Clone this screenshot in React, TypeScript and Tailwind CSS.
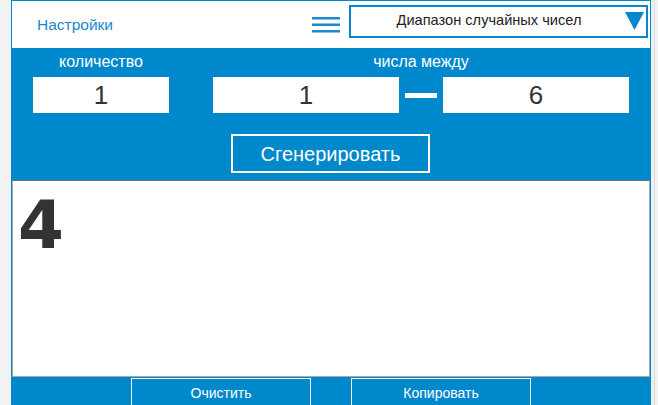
import { useState } from "react";

const font = { fontFamily: '"Liberation Sans", Arial, sans-serif' };

function Hamburger() {
  return (
    <svg width="28" height="18" viewBox="0 0 28 18" className="shrink-0">
      <rect x="0" y="1" width="28" height="2.5" fill="#1a8ad0" />
      <rect x="0" y="7.5" width="28" height="2.5" fill="#1a8ad0" />
      <rect x="0" y="14" width="28" height="2.5" fill="#1a8ad0" />
    </svg>
  );
}

export default function App() {
  const [count, setCount] = useState("1");
  const [from, setFrom] = useState("1");
  const [to, setTo] = useState("6");
  const [result, setResult] = useState("4");

  const generate = () => {
    const n = Math.max(1, parseInt(count) || 1);
    const a = parseInt(from) || 0;
    const b = parseInt(to) || 0;
    const lo = Math.min(a, b);
    const hi = Math.max(a, b);
    const out: number[] = [];
    for (let i = 0; i < n; i++) out.push(lo + Math.floor(Math.random() * (hi - lo + 1)));
    setResult(out.join(", "));
  };

  return (
    <div className="flex w-[658px] h-[405px] overflow-hidden bg-[#f3f3f3]" style={font}>
      <div className="w-[11px] shrink-0" />

      <div className="w-[640px] shrink-0 flex flex-col bg-[#0088cc] pt-[1px] pl-[1px] pr-[1px]">
        {/* Header */}
        <div className="h-[47px] shrink-0 bg-white flex items-center pl-[25px] pr-[2px]">
          <span className="text-[15.5px] text-[#1a88cc] mt-[1px]">Настройки</span>
          <div className="flex-1" />
          <Hamburger />
          <div className="ml-[9px] w-[299px] h-[33px] mb-[7px] border-2 border-[#0a86cc] flex items-center">
            <span className="flex-1 text-center text-[14.6px] text-[#222] pl-[2px]">Диапазон случайных чисел</span>
            <svg width="19" height="18" viewBox="0 0 19 18" className="mr-[2px]">
              <polygon points="0,0 19,0 9.5,18" fill="#0a86cc" />
            </svg>
          </div>
        </div>

        {/* Controls */}
        <div className="flex flex-col shrink-0 pt-[4px] pb-[7px]">
          <div className="flex pl-[21px]">
            <div className="w-[136px] flex flex-col items-center">
              <span className="h-[20px] leading-[20px] text-[16px] text-white">количество</span>
              <input
                value={count}
                onChange={(e) => setCount(e.target.value)}
                style={font}
                className="mt-[5px] w-[136px] h-[36px] bg-white text-center text-[26px] text-[#333] outline-none"
              />
            </div>
            <div className="ml-[44px] w-[416px] flex flex-col items-center">
              <span className="h-[20px] leading-[20px] text-[16px] text-white">числа между</span>
              <div className="mt-[5px] flex items-center">
                <input
                  value={from}
                  onChange={(e) => setFrom(e.target.value)}
                  style={font}
                  className="w-[186px] h-[36px] bg-white text-center text-[26px] text-[#333] outline-none"
                />
                <div className="mx-[6px] w-[32px] h-[5px] bg-white" />
                <input
                  value={to}
                  onChange={(e) => setTo(e.target.value)}
                  style={font}
                  className="w-[186px] h-[36px] bg-white text-center text-[26px] text-[#333] outline-none"
                />
              </div>
            </div>
          </div>
          <div className="flex justify-center mt-[21px] pr-[1px]">
            <button
              onClick={generate}
              style={font}
              className="w-[199px] h-[39px] border-2 border-white text-white text-[20px] cursor-pointer"
            >
              Сгенерировать
            </button>
          </div>
        </div>

        {/* Result */}
        <div className="h-[197px] shrink-0 bg-white border border-[#a8a8a8] border-t-[#6e6e6e] pl-[5px] pt-[12px]">
          <div
            className="text-[66px] leading-none font-bold text-[#333]"
            style={{ fontFamily: '"DejaVu Sans", Verdana, sans-serif' }}
          >
            {result}
          </div>
        </div>

        {/* Bottom actions */}
        <div className="flex shrink-0 pl-[119px] pt-[1px]">
          <button
            onClick={() => setResult("")}
            style={font}
            className="w-[180px] h-[30px] shrink-0 border border-white text-white text-[14px] cursor-pointer"
          >
            Очистить
          </button>
          <button
            onClick={() => navigator.clipboard?.writeText(result)}
            style={font}
            className="ml-[40px] w-[180px] h-[30px] shrink-0 border border-white text-white text-[14px] cursor-pointer"
          >
            Копировать
          </button>
        </div>
      </div>

      <div className="w-[3px] shrink-0 bg-[#f0f0f0]" />
      <div className="w-[1px] shrink-0 bg-[#dadada]" />
    </div>
  );
}
